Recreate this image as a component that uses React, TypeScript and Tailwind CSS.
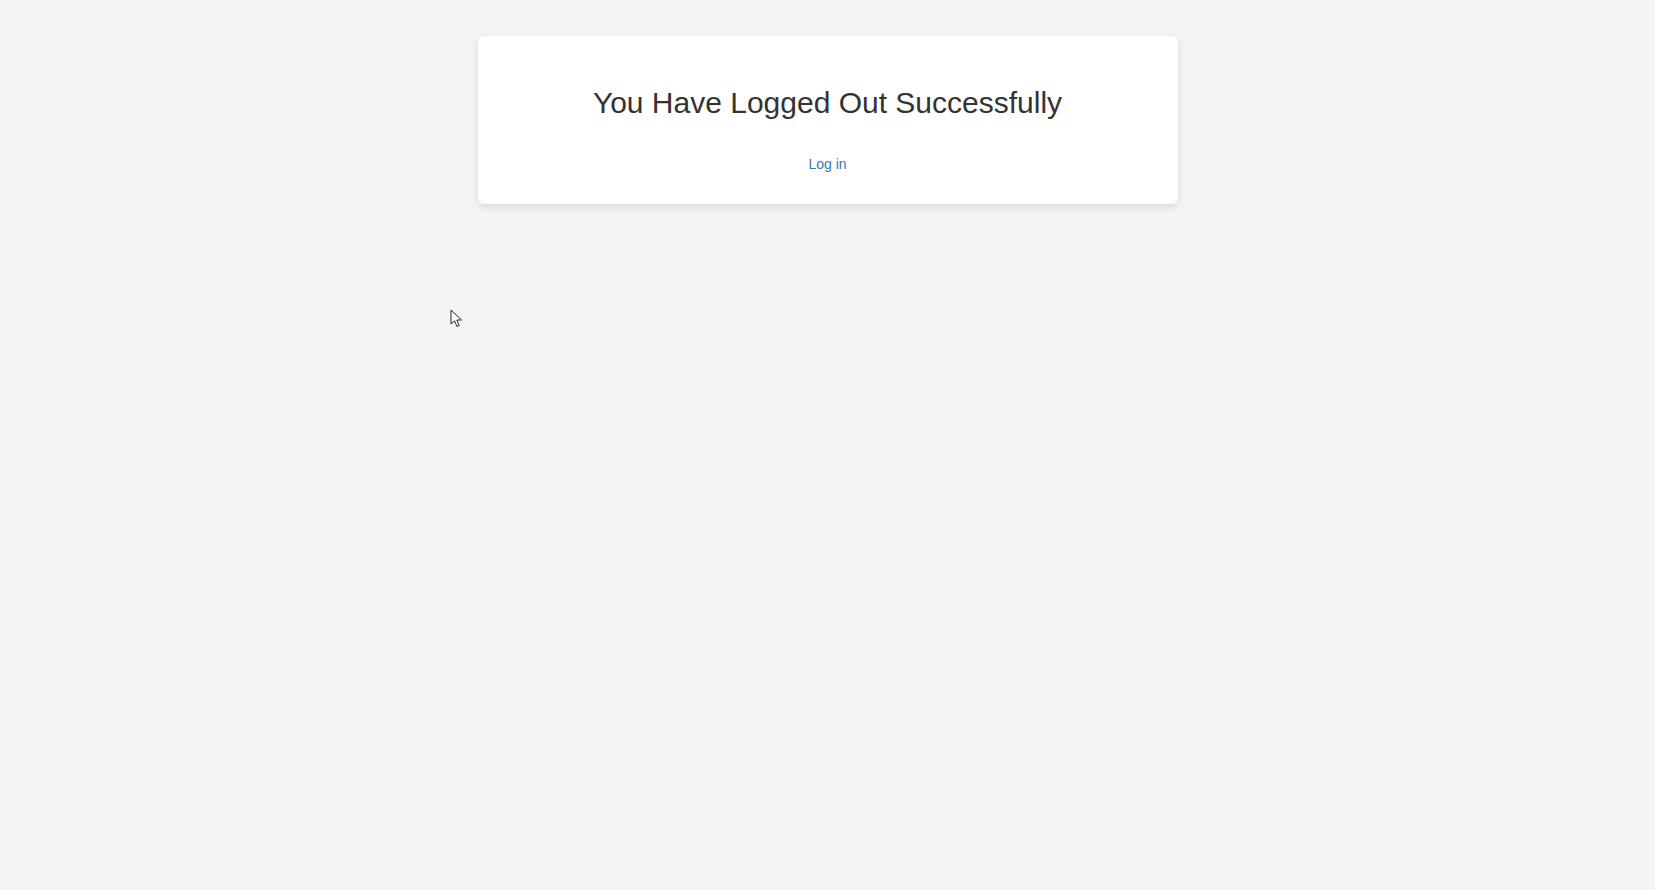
export default function App() {
  return (
    <div className="relative min-h-[890px] bg-[#f4f4f4] pt-9" style={{ fontFamily: '"Liberation Sans", Arial, sans-serif' }}>
      <div className="mx-auto w-[700px] rounded-md bg-white pt-[50px] pb-[28px] text-center shadow-[0_3px_8px_rgba(0,0,0,0.12)]">
        <h1 className="text-[30px] leading-[33px] text-[#333333]">You Have Logged Out Successfully</h1>
        <a href="#" className="mt-[35px] inline-block text-[14px] leading-[20px] text-[#337ab7]">
          Log in
        </a>
      </div>
      <svg className="absolute left-[450px] top-[309px]" width="14" height="20" viewBox="0 0 14 20">
        <path d="M1 1 L1 15 L4.5 11.8 L7 17.5 L9.2 16.5 L6.8 11 L11.5 11 Z" fill="#fff" stroke="#222" strokeWidth="1" strokeLinejoin="round" />
      </svg>
    </div>
  )
}
